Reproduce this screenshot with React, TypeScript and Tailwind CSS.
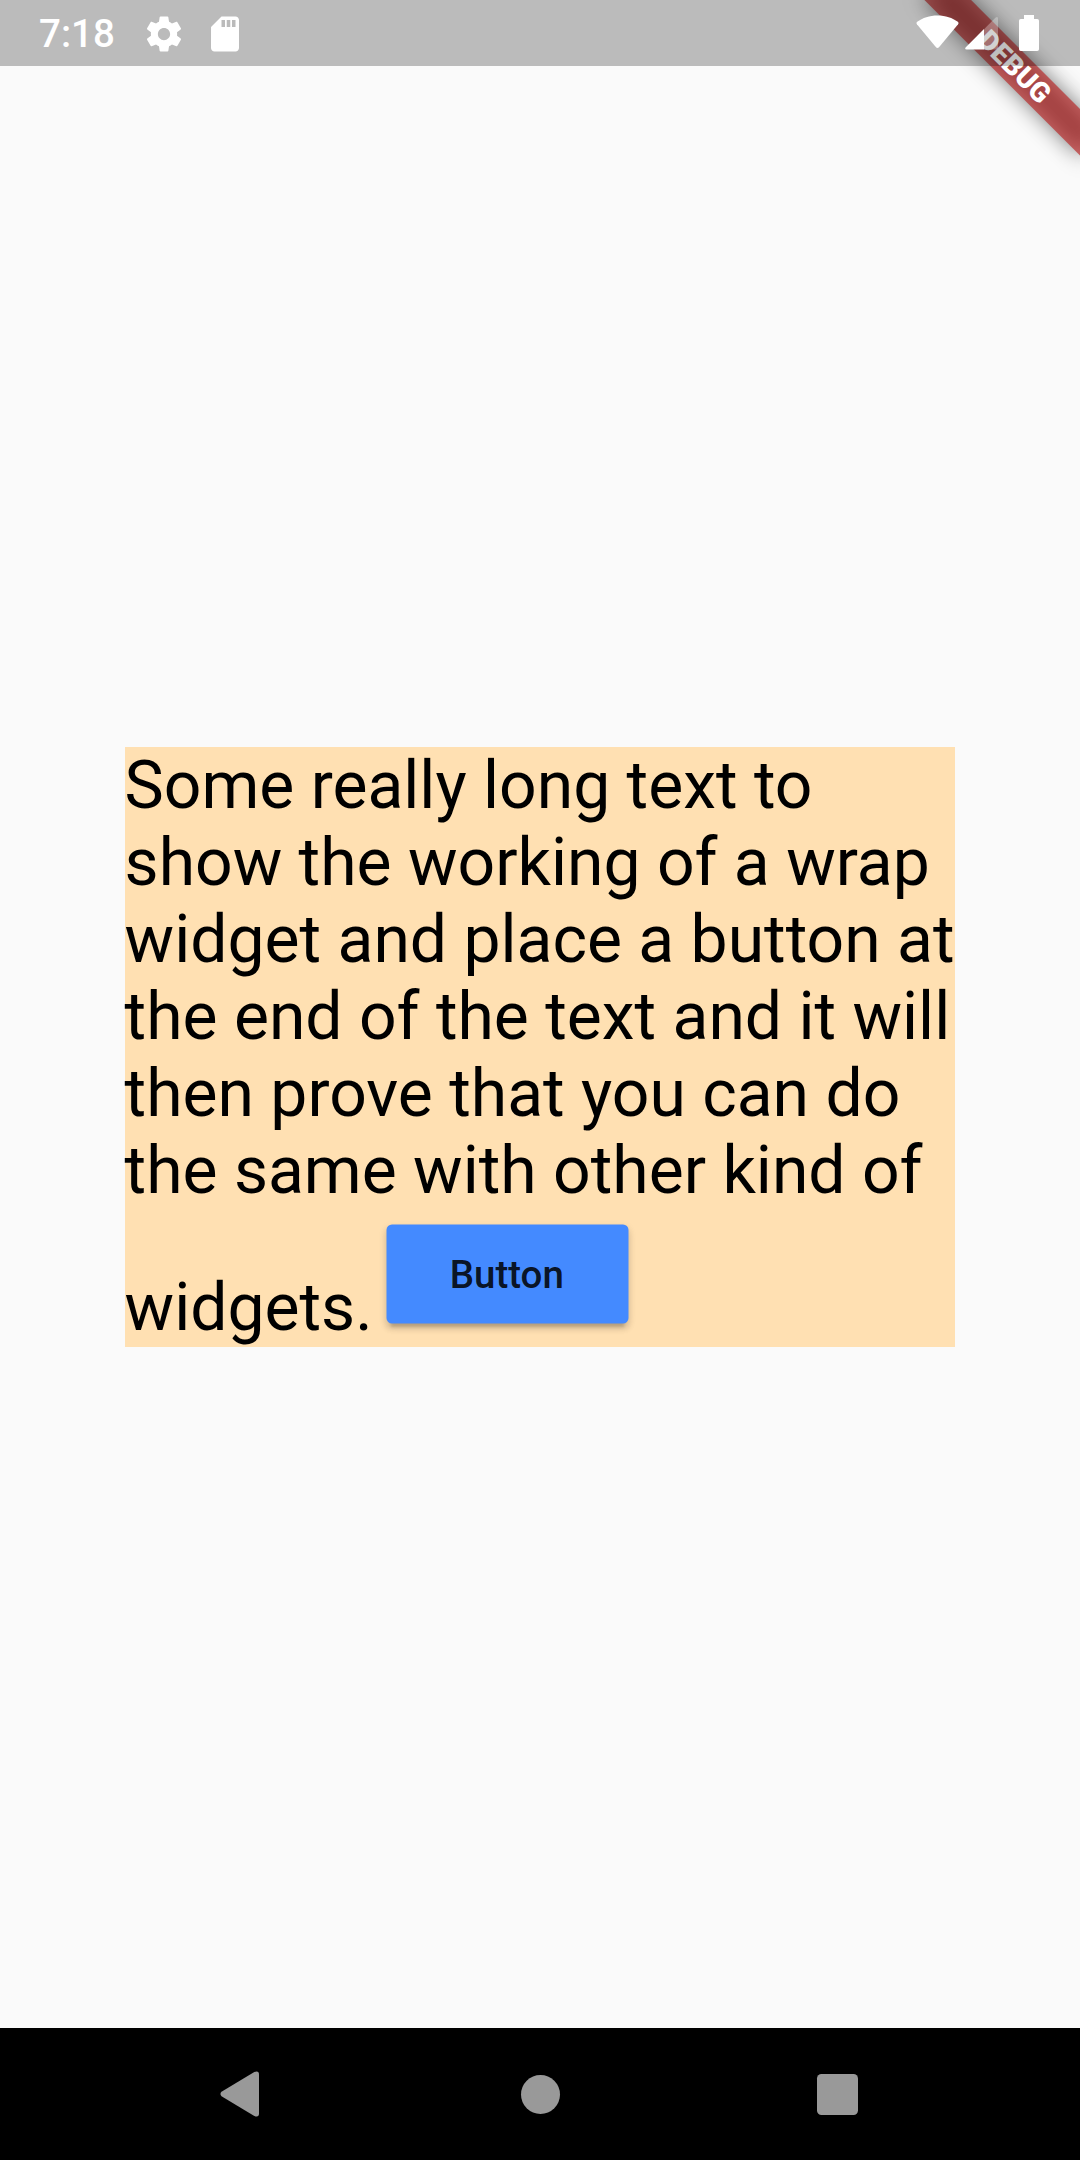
const lines = [
  "Some really long text to",
  "show the working of a wrap",
  "widget and place a button at",
  "the end of the text and it will",
  "then prove that you can do",
  "the same with other kind of",
];

function GearIcon() {
  return (
    <svg className="size-[42px]" viewBox="0 0 24 24" fill="currentColor">
      <path d="M19.43 12.98c.04-.32.07-.64.07-.98s-.03-.66-.07-.98l2.11-1.65c.19-.15.24-.42.12-.64l-2-3.46c-.12-.22-.39-.3-.61-.22l-2.49 1c-.52-.4-1.08-.73-1.69-.98l-.38-2.65C14.46 2.18 14.25 2 14 2h-4c-.25 0-.46.18-.49.42l-.38 2.65c-.61.25-1.17.59-1.69.98l-2.49-1c-.23-.09-.49 0-.61.22l-2 3.46c-.13.22-.07.49.12.64l2.11 1.65c-.04.32-.07.65-.07.98s.03.66.07.98l-2.11 1.65c-.19.15-.24.42-.12.64l2 3.46c.12.22.39.3.61.22l2.49-1c.52.4 1.08.73 1.69.98l.38 2.65c.03.24.24.42.49.42h4c.25 0 .46-.18.49-.42l.38-2.65c.61-.25 1.17-.59 1.69-.98l2.49 1c.23.09.49 0 .61-.22l2-3.46c.12-.22.07-.49-.12-.64l-2.11-1.65zM12 15.5c-1.93 0-3.5-1.57-3.5-3.5s1.57-3.5 3.5-3.5 3.5 1.57 3.5 3.5-1.57 3.5-3.5 3.5z" />
    </svg>
  );
}

function SdCardIcon() {
  return (
    <svg className="size-[42px]" viewBox="0 0 24 24" fill="currentColor">
      <path d="M18 2h-8L4.02 8 4 20c0 1.1.9 2 2 2h12c1.1 0 2-.9 2-2V4c0-1.1-.9-2-2-2zm-6 6h-2V4h2v4zm3 0h-2V4h2v4zm3 0h-2V4h2v4z" />
    </svg>
  );
}

function WifiIcon() {
  return (
    <svg className="h-[34px] w-[43px]" viewBox="0 0 43 34" fill="currentColor">
      <path d="M21.5 0.5C13.5 0.5 6.6 2.9 1.2 6.8Q-0.1 7.9 0.9 9.2L19.8 32Q21.5 34 23.2 32L42.1 9.2Q43.1 7.9 41.8 6.8C36.4 2.9 29.5 0.5 21.5 0.5Z" />
    </svg>
  );
}

function SignalIcon() {
  return (
    <svg className="h-[34px] w-[34px]" viewBox="0 0 34 34" fill="currentColor">
      <path fillOpacity="0.3" d="M19 13.2L30.6 1.6Q33 0 33 2.8V31Q33 33.5 30.5 33.5H19Z" />
      <path d="M19 13V33.500H1.500Q-0.600 33 0.600 31.400Z" />
    </svg>
  );
}

function BatteryIcon() {
  return (
    <svg className="h-[36px] w-[20px]" viewBox="0 0 20 36" fill="currentColor">
      <path d="M5 0H15V4H18.200Q20 4 20 5.800V34.200Q20 36 18.200 36H1.800Q0 36 0 34.200V5.800Q0 4 1.800 4H5Z" />
    </svg>
  );
}

function StatusBar() {
  return (
    <header className="absolute inset-x-0 top-0 flex h-[66px] items-center bg-black/25 pl-[39px] pr-[41px] text-white">
      <span className="w-[104px] pt-[2px] text-[38.500px] leading-[66px] font-medium">7:18</span>
      <div className="flex items-center gap-[19px] pt-[1px]">
        <GearIcon />
        <SdCardIcon />
      </div>
      <div className="ml-auto flex h-[36px] items-start">
        <WifiIcon />
        <div className="ml-[6px] pt-[1px]">
          <SignalIcon />
        </div>
        <div className="ml-[20px]">
          <BatteryIcon />
        </div>
      </div>
    </header>
  );
}

function DebugBanner() {
  return (
    <div className="absolute top-0 right-0 size-[220px] overflow-hidden">
      <div className="absolute top-0 left-full h-0 w-0 rotate-45">
        <div className="absolute top-[77px] -left-[110px] h-[33px] w-[220px] bg-black/50 blur-[10.900px]" />
        <div className="absolute top-[77px] -left-[110px] h-[33px] w-[220px] bg-[#b71c1c]/63 pl-[2px] text-center text-[28.050px] leading-[33px] font-black text-white">
          DEBUG
        </div>
      </div>
    </div>
  );
}

function NavigationBar() {
  return (
    <nav className="flex h-[132px] items-center bg-black pl-[220px] text-[#999999]">
      <svg className="h-[46px] w-[39px]" viewBox="0 0 39 46" fill="currentColor">
        <path d="M1.500 20.800L34.300 1Q39 -0.800 39 3.500V42.500Q39 46.800 34.300 45L1.500 25.200Q-0.600 23 1.500 20.800Z" />
      </svg>
      <div className="ml-[262px] size-[39px] rounded-full bg-current" />
      <div className="ml-[257px] size-[41px] rounded-[4.500px] bg-current" />
    </nav>
  );
}

export default function App() {
  return (
    <div className="relative flex h-[2160px] w-[1080px] flex-col overflow-hidden bg-[#fafafa] font-[Roboto,sans-serif]">
      <main className="flex grow flex-col items-center pt-[747px]">
        <div className="h-[599.700px] w-[830.800px] bg-[#ffe0b2] text-[66px] leading-[77px] whitespace-nowrap text-black">
          {lines.map((line) => (
            <p key={line}>{line}</p>
          ))}
          <div className="flex pt-[15px]">
            <span className="w-[261.700px] pt-[45px]">widgets.</span>
            <button className="h-[99px] w-[242px] translate-x-[0.5px] translate-y-[0.5px] rounded-[5.500px] bg-[#448aff] pt-px pr-[2px] text-[38.500px] leading-[98px] font-medium text-black/87 shadow-[0_8px_3px_-5px_rgba(0,0,0,0.14),0_5px_6px_rgba(0,0,0,0.12),0_3px_8px_rgba(0,0,0,0.08)]">
              Button
            </button>
          </div>
        </div>
      </main>
      <NavigationBar />
      <DebugBanner />
      <StatusBar />
    </div>
  );
}
